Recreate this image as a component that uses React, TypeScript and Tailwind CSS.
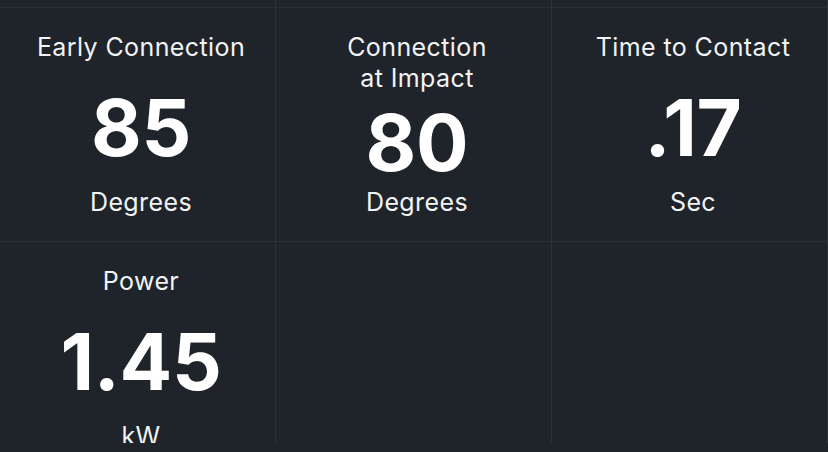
const stats = [
  { title: ['Early Connection'], value: '85', unit: 'Degrees' },
  { title: ['Connection', 'at Impact'], value: '80', unit: 'Degrees' },
  { title: ['Time to Contact'], value: '.17', unit: 'Sec' },
  { title: ['Power'], value: '1.45', unit: 'kW' },
]

function StatCell({ title, value, unit }: { title: string[]; value: string; unit: string }) {
  return (
    <div className="flex h-[234px] flex-col items-center border-r border-b border-[#2b3038] pt-[24px] pr-[2px] pb-[23px] pl-[9px] text-center">
      <div className="text-[25px] leading-[31px] tracking-[0.4px] text-[#f2f3f5]">
        {title.map((line) => (
          <div key={line}>{line}</div>
        ))}
      </div>
      <div className="flex flex-1 items-center pt-[5px] text-[78px] leading-none font-bold tracking-[-0.3px] text-white">
        {value}
      </div>
      <div className="text-[25px] leading-[31px] tracking-[0.4px] text-[#f2f3f5]">{unit}</div>
    </div>
  )
}

export default function App() {
  return (
    <main
      className="flex h-[452px] w-[828px] flex-col overflow-hidden bg-[#1f232a]"
      style={{ fontFamily: 'Inter, "Noto Sans", sans-serif' }}
    >
      <div className="min-h-0 flex-1 overflow-hidden">
        <div className="grid grid-cols-3">
          <div className="h-[8px] border-r border-b border-[#2b3038]" />
          <div className="h-[8px] border-r border-b border-[#2b3038]" />
          <div className="h-[8px] border-r border-b border-[#2b3038]" />
          {stats.map((s) => (
            <StatCell key={s.value} {...s} />
          ))}
          <div className="h-[234px] border-r border-b border-[#2b3038]" />
          <div className="h-[234px] border-r border-b border-[#2b3038]" />
        </div>
      </div>
      <div className="h-[9px] shrink-0 bg-[#1f232a]" />
    </main>
  )
}
